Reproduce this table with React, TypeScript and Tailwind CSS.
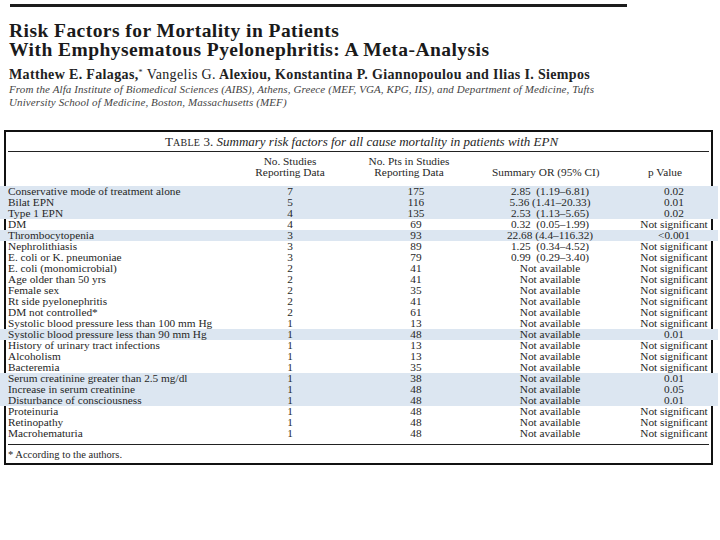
type Row = {
  factor: string;
  studies: string;
  pts: string;
  or: string;
  p: string;
  hi?: boolean;
};

const rows: Row[] = [
  { factor: 'Conservative mode of treatment alone', studies: '7', pts: '175', or: '2.85  (1.19–6.81)', p: '0.02', hi: true },
  { factor: 'Bilat EPN', studies: '5', pts: '116', or: '5.36 (1.41–20.33)', p: '0.01', hi: true },
  { factor: 'Type 1 EPN', studies: '4', pts: '135', or: '2.53  (1.13–5.65)', p: '0.02', hi: true },
  { factor: 'DM', studies: '4', pts: '69', or: '0.32  (0.05–1.99)', p: 'Not significant' },
  { factor: 'Thrombocytopenia', studies: '3', pts: '93', or: '22.68 (4.4–116.32)', p: '<0.001', hi: true },
  { factor: 'Nephrolithiasis', studies: '3', pts: '89', or: '1.25  (0.34–4.52)', p: 'Not significant' },
  { factor: 'E. coli or K. pneumoniae', studies: '3', pts: '79', or: '0.99  (0.29–3.40)', p: 'Not significant' },
  { factor: 'E. coli (monomicrobial)', studies: '2', pts: '41', or: 'Not available', p: 'Not significant' },
  { factor: 'Age older than 50 yrs', studies: '2', pts: '41', or: 'Not available', p: 'Not significant' },
  { factor: 'Female sex', studies: '2', pts: '35', or: 'Not available', p: 'Not significant' },
  { factor: 'Rt side pyelonephritis', studies: '2', pts: '41', or: 'Not available', p: 'Not significant' },
  { factor: 'DM not controlled*', studies: '2', pts: '61', or: 'Not available', p: 'Not significant' },
  { factor: 'Systolic blood pressure less than 100 mm Hg', studies: '1', pts: '13', or: 'Not available', p: 'Not significant' },
  { factor: 'Systolic blood pressure less than 90 mm Hg', studies: '1', pts: '48', or: 'Not available', p: '0.01', hi: true },
  { factor: 'History of urinary tract infections', studies: '1', pts: '13', or: 'Not available', p: 'Not significant' },
  { factor: 'Alcoholism', studies: '1', pts: '13', or: 'Not available', p: 'Not significant' },
  { factor: 'Bacteremia', studies: '1', pts: '35', or: 'Not available', p: 'Not significant' },
  { factor: 'Serum creatinine greater than 2.5 mg/dl', studies: '1', pts: '38', or: 'Not available', p: '0.01', hi: true },
  { factor: 'Increase in serum creatinine', studies: '1', pts: '48', or: 'Not available', p: '0.05', hi: true },
  { factor: 'Disturbance of consciousness', studies: '1', pts: '48', or: 'Not available', p: '0.01', hi: true },
  { factor: 'Proteinuria', studies: '1', pts: '48', or: 'Not available', p: 'Not significant' },
  { factor: 'Retinopathy', studies: '1', pts: '48', or: 'Not available', p: 'Not significant' },
  { factor: 'Macrohematuria', studies: '1', pts: '48', or: 'Not available', p: 'Not significant' },
];

const serif = "font-['Liberation_Serif','Times_New_Roman',serif]";

export default function App() {
  return (
    <div className={`w-[720px] h-[540px] bg-white text-[#1e1e1e] ${serif} overflow-hidden`}>
      {/* top rule */}
      <div className="mt-[4px] ml-[10px] w-[617px] h-[3px] bg-[#1c1c1c]" />

      {/* article heading */}
      <div className="pl-[9px]">
        <h1 className="mt-[14px] text-[19.5px] leading-[19px] tracking-[0.45px] font-bold text-[#1a1a1a]">
          Risk Factors for Mortality in Patients
          <br />
          With Emphysematous Pyelonephritis: A Meta-Analysis
        </h1>
        <p className="mt-[8px] text-[14px] leading-[16px] tracking-[0.35px] font-bold text-[#222]">
          Matthew E. Falagas,<sup className="text-[8px] font-normal">*</sup>{' '}
          <span className="font-normal">Vangelis G.</span> Alexiou, Konstantina P. Giannopoulou and Ilias I. Siempos
        </p>
        <p className="text-[11px] leading-[13px] tracking-[0.1px] italic text-[#444]">
          From the Alfa Institute of Biomedical Sciences (AIBS), Athens, Greece (MEF, VGA, KPG, IIS), and Department of Medicine, Tufts
          <br />
          University School of Medicine, Boston, Massachusetts (MEF)
        </p>
      </div>

      {/* table box */}
      <div className="mt-[21px] ml-[4px] w-[709px] border-2 border-[#111] pb-[2px] text-[11.3px] text-[#262626]">
        <div className="h-[19px] flex items-center pl-[159px] text-[13px] whitespace-nowrap">
          <span>
            T<span className="text-[10px] tracking-[0.3px]">ABLE</span> 3.{' '}
            <i>Summary risk factors for all cause mortality in patients with EPN</i>
          </span>
        </div>
        <div className="mx-[2px] h-px bg-[#222]" />

        <div className="-ml-[6px] w-[718px] h-[34px] pb-[8px] pl-[8px] grid grid-cols-[232px_100px_152px_116px_110px] leading-[11px] items-end">
          <div />
          <div className="text-center">
            No. Studies
            <br />
            Reporting Data
          </div>
          <div className="text-center pr-[14px]">
            No. Pts in Studies
            <br />
            Reporting Data
          </div>
          <div className="text-center pr-[18px] whitespace-nowrap">Summary OR (95% CI)</div>
          <div className="text-center pl-[4px]">p Value</div>
        </div>

        <div className="-ml-[6px] w-[718px]">
          {rows.map((r) => (
            <div
              key={r.factor}
              className={`h-[11px] leading-[11px] pl-[8px] grid grid-cols-[232px_100px_152px_116px_110px] ${
                r.hi ? 'bg-[#dce6f1]' : ''
              }`}
            >
              <div className="whitespace-nowrap">{r.factor}</div>
              <div className="text-center">{r.studies}</div>
              <div className="text-center">{r.pts}</div>
              <div className="text-center whitespace-pre">{r.or}</div>
              <div className="text-center pl-[22px] whitespace-nowrap">{r.p}</div>
            </div>
          ))}
        </div>

        <div className="mt-[5px] mx-[2px] h-px bg-[#222]" />
        <div className="mt-[4px] pl-[2px] text-[10.5px] leading-[12px]">* According to the authors.</div>
      </div>
    </div>
  );
}
